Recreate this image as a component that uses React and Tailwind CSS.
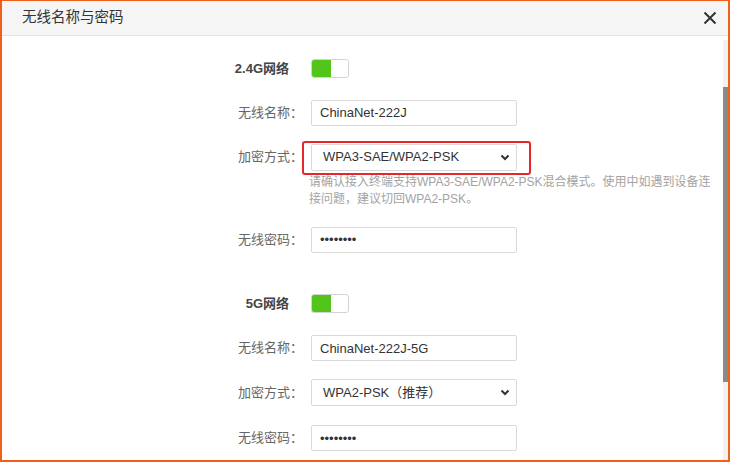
import React from 'react';

const font = { fontFamily: '"Liberation Sans", "Noto Sans CJK SC", sans-serif' };

const Label = ({ children, bold }) => (
  <div
    className={
      bold
        ? 'w-[301px] pr-[14px] text-right text-[13px] font-bold text-[#444]'
        : 'w-[301px] text-right text-[13px] text-[#666]'
    }
  >
    {children}
  </div>
);

const Toggle = () => (
  <div className="flex h-[19px] w-[38px] overflow-hidden rounded-[3px] border border-[#d4d4d4] bg-white">
    <div className="h-full w-[19px] bg-[#52c41a]"></div>
  </div>
);

const TextBox = ({ value, type = 'text' }) => (
  <input
    type={type}
    readOnly
    value={value}
    className="h-[26px] w-[206px] rounded-[2px] border border-[#d9d9d9] bg-white px-[8px] text-[13px] text-[#333] outline-none"
    style={font}
  />
);

const SelectBox = ({ value }) => (
  <div className="flex h-[27px] w-[206px] items-center justify-between rounded-[2px] border border-[#d9d9d9] bg-white pl-[11px] pr-[6px] text-[13px] text-[#333]">
    <span>{value}</span>
    <svg width="10" height="7" viewBox="0 0 10 7">
      <path d="M1.5 1.5 L5 5 L8.5 1.5" fill="none" stroke="#333" strokeWidth="2" />
    </svg>
  </div>
);

const Row = ({ label, bold, children, className = '' }) => (
  <div className={`flex items-center gap-[8px] ${className}`}>
    <Label bold={bold}>{label}</Label>
    {children}
  </div>
);

export default function App() {
  return (
    <div
      className="relative h-[462px] w-[730px] overflow-hidden border-t border-l-2 border-r-2 border-b-2 border-[#f0601a] bg-white"
      style={font}
    >
      {/* header */}
      <div className="flex h-[35px] items-center justify-between border-b border-[#e3e3e3] bg-[#f5f5f5] pl-[20px] pr-[10px]">
        <span className="text-[14.5px] text-[#333]">无线名称与密码</span>
        <svg width="14" height="14" viewBox="0 0 14 14" className="mr-[1px]">
          <path d="M1.5 1.5 L12.5 12.5 M12.5 1.5 L1.5 12.5" stroke="#333" strokeWidth="2" />
        </svg>
      </div>

      {/* body */}
      <div className="flex flex-col">
        <Row label="2.4G网络" bold className="mt-[23px]">
          <Toggle />
        </Row>
        <Row label="无线名称：" className="mt-[21px]">
          <TextBox value="ChinaNet-222J" />
        </Row>
        <div className="relative mt-[18px]">
          <Row label="加密方式：">
            <SelectBox value="WPA3-SAE/WPA2-PSK" />
          </Row>
          <div className="absolute left-[300px] top-[-3px] h-[34px] w-[229px] rounded-[3px] border-2 border-[#e8262a]"></div>
        </div>
        <div className="mt-[3px] pl-[307px] text-[12px] leading-[17px] whitespace-nowrap text-[#a3a3a3]">
          请确认接入终端支持WPA3-SAE/WPA2-PSK混合模式。使用中如遇到设备连
          <br />
          接问题，建议切回WPA2-PSK。
        </div>
        <Row label="无线密码：" className="mt-[19px]">
          <TextBox value="12345678" type="password" />
        </Row>

        <Row label="5G网络" bold className="mt-[41px]">
          <Toggle />
        </Row>
        <Row label="无线名称：" className="mt-[22px]">
          <TextBox value="ChinaNet-222J-5G" />
        </Row>
        <Row label="加密方式：" className="mt-[18px]">
          <SelectBox value="WPA2-PSK（推荐）" />
        </Row>
        <Row label="无线密码：" className="mt-[19px]">
          <TextBox value="12345678" type="password" />
        </Row>
      </div>

      {/* scrollbar */}
      <div className="absolute right-0 top-[39px] bottom-0 w-[5px] bg-[#f1f1f1]">
        <div className="mt-[47px] h-[295px] w-full bg-[#8a8a8a]"></div>
      </div>
    </div>
  );
}
